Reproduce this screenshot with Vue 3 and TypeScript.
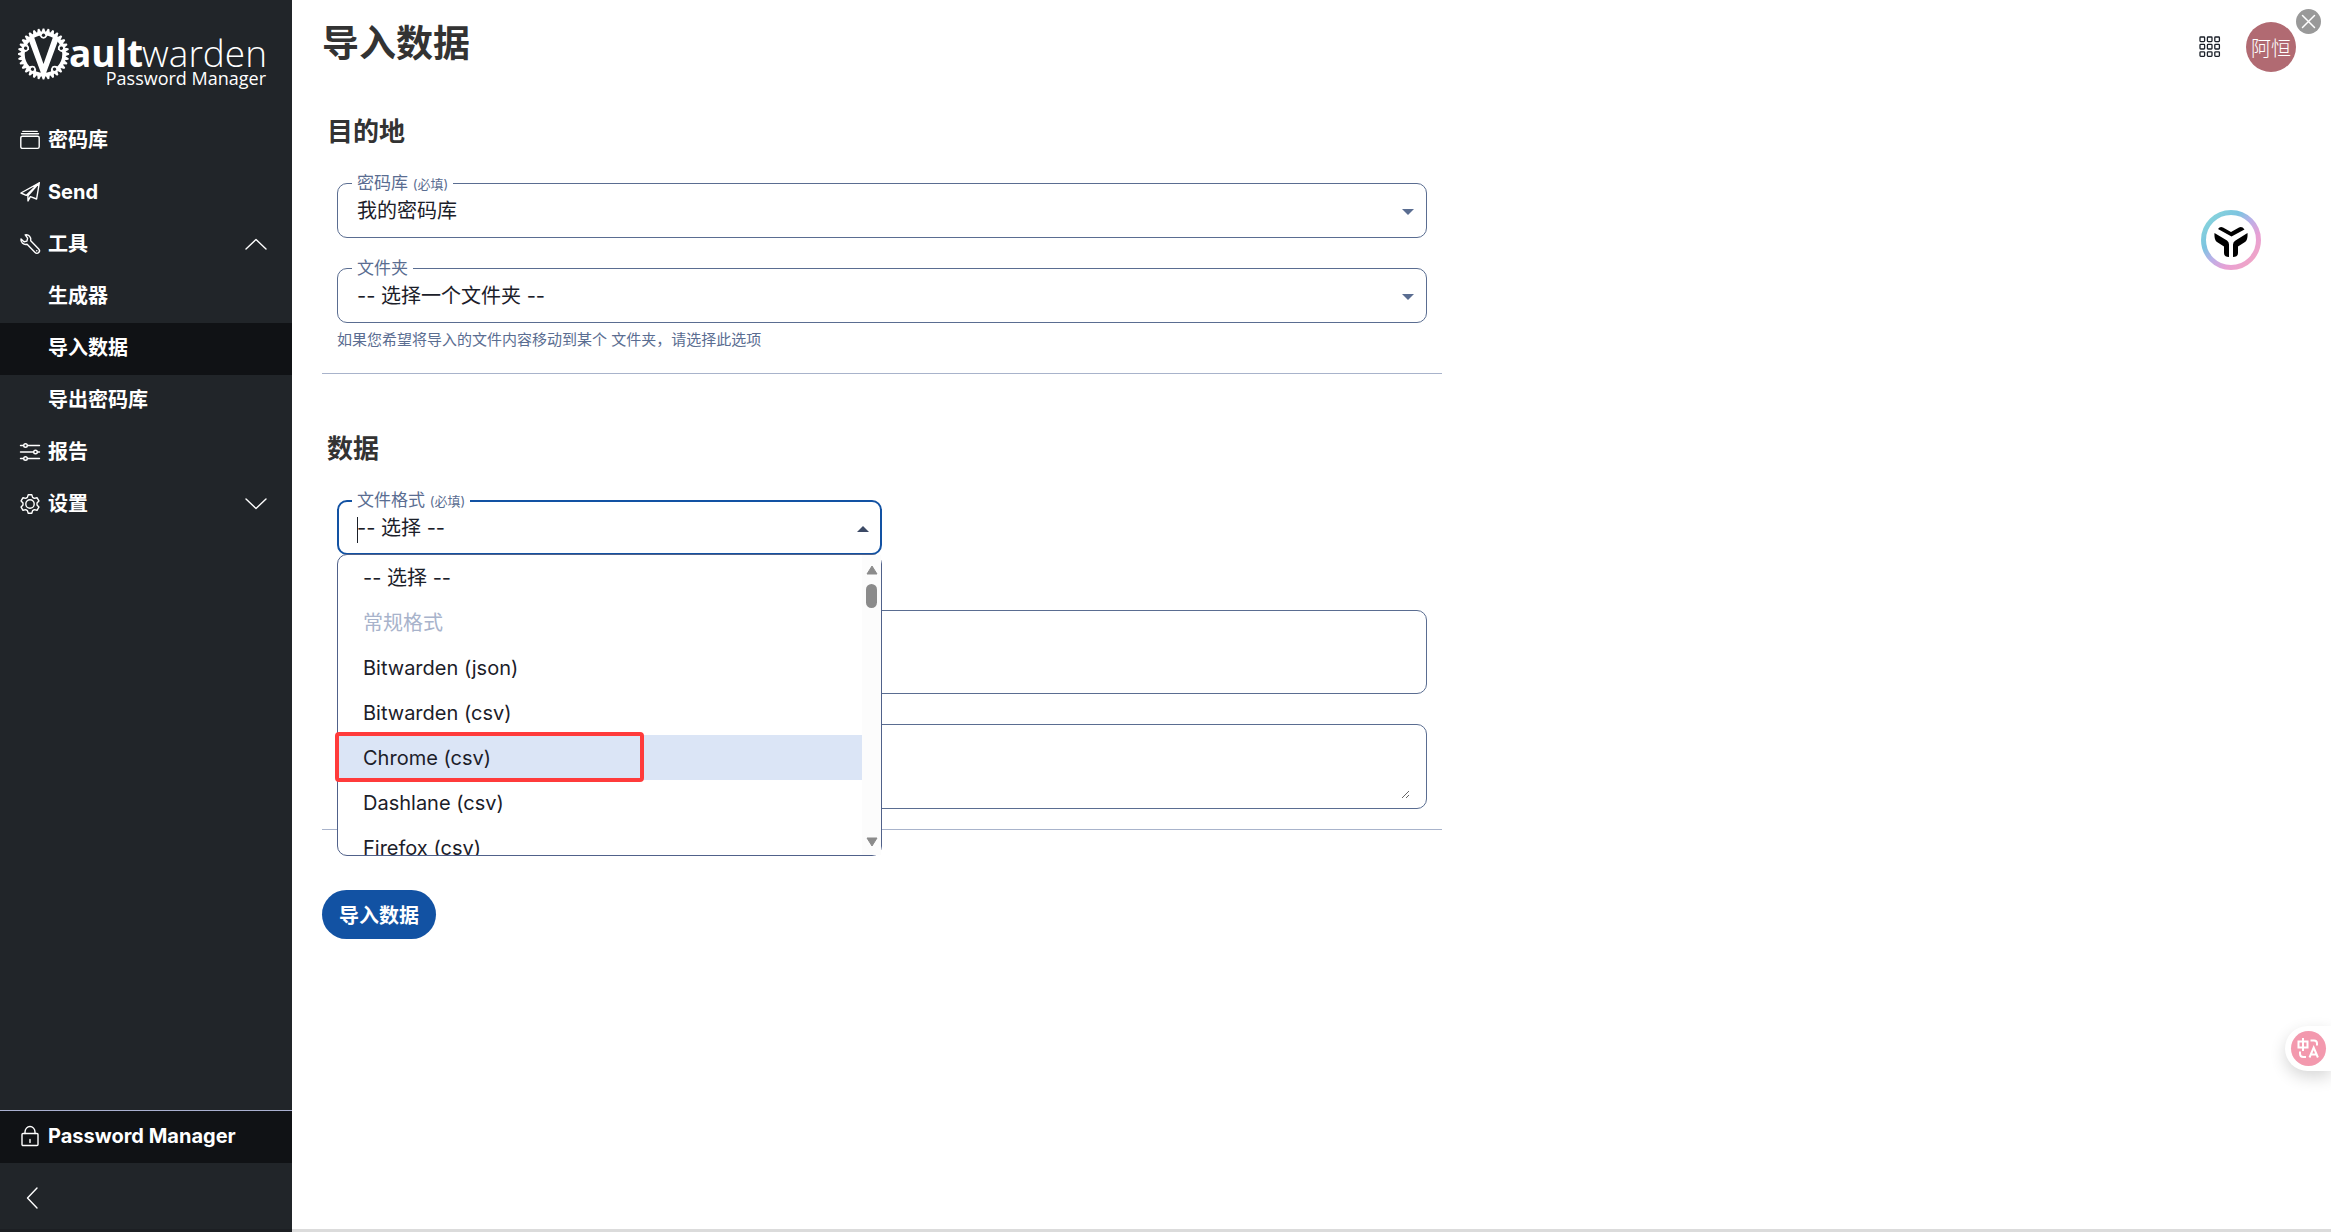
<script setup lang="ts">
import { ref } from 'vue'

interface NavItem {
  label: string
  icon?: 'vault' | 'send' | 'wrench' | 'sliders' | 'gear'
  active?: boolean
  chevron?: 'up' | 'down'
}

interface FormatOption {
  label: string
  heading?: boolean
  marked?: boolean
}

const navItems: NavItem[] = [
  { label: '密码库', icon: 'vault' },
  { label: 'Send', icon: 'send' },
  { label: '工具', icon: 'wrench', chevron: 'up' },
  { label: '生成器' },
  { label: '导入数据', active: true },
  { label: '导出密码库' },
  { label: '报告', icon: 'sliders' },
  { label: '设置', icon: 'gear', chevron: 'down' },
]

const formats: FormatOption[] = [
  { label: '-- 选择 --' },
  { label: '常规格式', heading: true },
  { label: 'Bitwarden (json)' },
  { label: 'Bitwarden (csv)' },
  { label: 'Chrome (csv)', marked: true },
  { label: 'Dashlane (csv)' },
  { label: 'Firefox (csv)' },
]

const vault = ref('我的密码库')
const folder = ref('-- 选择一个文件夹 --')
const format = ref('-- 选择 --')
const pasted = ref('')

// Teeth of the chainring around the V in the logo
const teeth = Array.from({ length: 32 }, (_, i) => i * 11.25)
const bolts = [0, 72, 144, 216, 288]
const gridCells = [0, 1, 2].flatMap((r) => [0, 1, 2].map((c) => ({ x: 1 + c * 7.4, y: 1 + r * 7.4 })))
</script>

<template>
  <div class="app">
    <aside class="sidebar">
      <a class="logo" href="#" aria-label="Vaultwarden Password Manager">
        <svg width="256" height="66" viewBox="0 0 256 66" fill="#fff">
          <g transform="translate(25.5 26)">
            <path v-for="a in teeth" :key="a" d="M-2.4-21 L-.8-25.6 H.8 L2.4-21Z" :transform="`rotate(${a})`" />
            <circle r="20.6" fill="none" stroke="#fff" stroke-width="3.600" />
            <g v-for="b in bolts" :key="b" :transform="`rotate(${b})`">
              <path d="M-4.5-19 Q-2.6-15.6 0-15.2 Q2.6-15.6 4.5-19Z" />
              <circle cy="-18.8" r="1.7" fill="#212529" />
            </g>
            <path d="M-15-14.500 L-9.500-17 L0 10 L9.500-17 L15-14.500 L2 20.500 H-2Z" />
          </g>
          <text x="51" y="39" class="logo-bold">ault</text>
          <text x="249" y="39" text-anchor="end" class="logo-light">warden</text>
          <text x="248" y="57" text-anchor="end" class="logo-sub">Password Manager</text>
        </svg>
      </a>

      <nav class="nav">
        <a v-for="item in navItems" :key="item.label" href="#" class="nav-item" :class="{ active: item.active }">
          <span class="nav-icon">
            <svg v-if="item.icon === 'vault'" viewBox="0 0 20 20" class="line">
              <rect x=".8" y="6.2" width="18.4" height="12.2" rx="1.6" />
              <path d="M1.5 3.8h17M2.8 1.4h14.4" />
            </svg>
            <svg v-else-if="item.icon === 'send'" viewBox="0 0 20 20" class="line">
              <path d="M19.3.8 .9 11l5.3 2.4L19.3.8 16.6 17l-6.2-2.4-2.4 4.3-.1-5.1L19.3.8Z" />
            </svg>
            <svg v-else-if="item.icon === 'wrench'" viewBox="0 0 20 20" class="line">
              <path d="M5.2.9C8.6.2 11.600 3.200 10.700 6.700l8 8.300a2.500 2.500 0 0 1-3.600 3.600l-8-8.300C3.600 11.200.300 8.200 1 4.900l3 2.900 2.900-.7.700-2.900L5.200.900Z" />
              <path d="M16.700 16.700h.1" />
            </svg>
            <svg v-else-if="item.icon === 'sliders'" viewBox="0 0 20 20" class="line">
              <path d="M.5 3.500h3M7.500 3.500h12M.5 10h13M17.500 10h2M.5 16.500h3M7.500 16.500h12" />
              <circle cx="5.500" cy="3.500" r="1.800" /><circle cx="15.500" cy="10" r="1.800" /><circle cx="5.500" cy="16.500" r="1.800" />
            </svg>
            <svg v-else-if="item.icon === 'gear'" viewBox="0 0 20 20" class="line">
              <circle cx="10" cy="10" r="4.200" />
              <path d="M8.200.8h3.600l.8 2.600 1.700 1 2.700-.7 1.900 3.200-1.900 2v2.200l1.900 2-1.900 3.200-2.700-.7-1.700 1-.8 2.600H8.200l-.8-2.600-1.700-1-2.700.7-1.900-3.200 1.900-2V8.900l-1.900-2L3 3.700l2.700.7 1.700-1Z" />
            </svg>
          </span>
          <span class="nav-label">{{ item.label }}</span>
          <svg v-if="item.chevron" class="line chevron" viewBox="0 0 22 12">
            <path :d="item.chevron === 'up' ? 'M1 11 11 1.500 21 11' : 'M1 1 11 10.500 21 1'" />
          </svg>
        </a>
      </nav>

      <a class="nav-item product" href="#">
        <span class="nav-icon">
          <svg viewBox="0 0 20 20" class="line">
            <rect x="2" y="7.500" width="16" height="12" rx="1" />
            <path d="M5 7.500V6a5 5.500 0 0 1 10 0v1.500M10 13.500v3" />
          </svg>
        </span>
        <span class="nav-label">Password Manager</span>
      </a>
      <div class="collapse-row">
        <button type="button" class="collapse" aria-label="收起">
          <svg class="line" width="12" height="22" viewBox="0 0 12 22"><path d="M11 1 1.500 11 11 21" /></svg>
        </button>
      </div>
    </aside>

    <main class="main">
      <header class="header">
        <h1>导入数据</h1>
        <div class="header-actions">
          <button type="button" class="grid-button" aria-label="切换产品">
            <svg width="22" height="22" viewBox="0 0 22 22">
              <rect v-for="(c, i) in gridCells" :key="i" :x="c.x" :y="c.y" width="4.600" height="4.600" rx=".8" />
            </svg>
          </button>
          <button type="button" class="avatar">阿恒</button>
        </div>
      </header>

      <form class="form" @submit.prevent>
        <section class="section">
          <h2>目的地</h2>
          <div class="fields">
            <div class="field">
              <label for="vault">密码库 <small>(必填)</small></label>
              <select id="vault" v-model="vault"><option>我的密码库</option></select>
              <svg class="caret" viewBox="0 0 12 6"><path d="M0 0h12L6 6Z" /></svg>
            </div>
            <div class="field with-hint">
              <label for="folder">文件夹</label>
              <select id="folder" v-model="folder"><option>-- 选择一个文件夹 --</option></select>
              <svg class="caret" viewBox="0 0 12 6"><path d="M0 0h12L6 6Z" /></svg>
            </div>
            <p class="hint">如果您希望将导入的文件内容移动到某个 文件夹，请选择此选项</p>
          </div>
        </section>

        <section class="section data">
          <h2>数据</h2>
          <div class="fields">
            <div class="field half open">
              <label for="format">文件格式 <small>(必填)</small></label>
              <select id="format" v-model="format"><option>-- 选择 --</option></select>
              <span class="text-cursor"></span>
              <svg class="caret" viewBox="0 0 12 6"><path d="M0 6h12L6 0Z" /></svg>
              <div class="panel">
                <ul class="options" role="listbox">
                  <li
                    v-for="o in formats"
                    :key="o.label"
                    :role="o.heading ? 'presentation' : 'option'"
                    class="option"
                    :class="{ heading: o.heading, marked: o.marked }"
                  >{{ o.label }}</li>
                </ul>
                <div class="scrollbar">
                  <svg width="12" height="10" viewBox="0 0 12 10"><path d="M6 1 11 9H1Z" /></svg>
                  <span class="thumb"></span>
                  <svg class="down" width="12" height="10" viewBox="0 0 12 10"><path d="M6 9 11 1H1Z" /></svg>
                </div>
                <span class="highlight"></span>
              </div>
            </div>
            <div class="box file-box"></div>
            <div class="box paste-box">
              <textarea v-model="pasted" aria-label="导入数据"></textarea>
            </div>
          </div>
        </section>

        <button type="submit" class="submit">导入数据</button>
      </form>
    </main>

    <button type="button" class="float close" aria-label="关闭">
      <svg width="25" height="25" viewBox="0 0 25 25"><path d="M6.500 6.500l12 12M18.500 6.500l-12 12" stroke="#fff" stroke-width="1.500" stroke-linecap="round" /></svg>
    </button>
    <button type="button" class="float assistant" aria-label="助手">
      <svg width="60" height="60" viewBox="0 0 60 60">
        <defs>
          <linearGradient id="ring" x1="0.1" y1="0.1" x2="0.9" y2="0.9">
            <stop offset="0" stop-color="#86d3dc" /><stop offset=".28" stop-color="#7cc4e0" />
            <stop offset=".5" stop-color="#bab0e8" /><stop offset=".75" stop-color="#e8a0d4" /><stop offset="1" stop-color="#f0a5c6" />
          </linearGradient>
        </defs>
        <circle cx="30" cy="30" r="27.500" fill="#fff" stroke="url(#ring)" stroke-width="5" />
        <path d="M17 19q2-3 5-1.500L30 22l8-4.500q3-1.500 5.500 2L30.500 26.500Z" />
        <path d="M13.500 23 26 30.500q2 1.500 2 4V47q-5 0-5-4V36.500L16 32q-3-2-2.500-9Z" />
        <path d="M46.500 23 34.500 30.500q-2.500 1.500-2.500 4V47q5 0 5-4V36.500l7-4.500q3-2 2.500-9Z" />
      </svg>
    </button>
    <div class="float translate">
      <button type="button" aria-label="翻译">
        <svg width="35" height="35" viewBox="0 0 35 35" fill="none" stroke="#fff" stroke-width="2">
          <path d="M7.500 10.500h9v6h-9ZM12 7v13M19.500 9.500h3.500q3 0 3 3v2M9 20.500v2q0 3.500 3.500 3.500H15" />
          <path d="M18.500 26.500 22.700 16.500 26.900 26.500M20 23.500h5.500" />
        </svg>
      </button>
    </div>
    <div class="float bottom-edge"></div>
  </div>
</template>

<style>
body {
  margin: 0;
}
</style>

<style scoped>
* {
  box-sizing: border-box;
}
.app {
  position: relative;
  display: flex;
  min-height: 100vh;
  overflow: hidden;
  background: #fff;
  color: #1b2029;
  font-family: Inter, "Noto Sans CJK SC", sans-serif;
  font-size: 20px;
}
button {
  padding: 0;
  border: 0;
  background: none;
  font: inherit;
  cursor: pointer;
}
button svg {
  display: block;
}
.line {
  fill: none;
  stroke: #fff;
  stroke-width: 1.4;
  stroke-linecap: round;
  stroke-linejoin: round;
}
.sidebar {
  display: flex;
  flex: none;
  flex-direction: column;
  width: 292px;
  background: #212529;
  color: #fff;
}
.logo {
  display: block;
  height: 115px;
  padding: 28px 18px 0;
}
.logo text {
  font-family: "Open Sans", "Noto Sans", sans-serif;
}
.logo .logo-bold {
  font-size: 37px;
  font-weight: 700;
}
.logo .logo-light {
  font-size: 37px;
  font-weight: 300;
}
.logo .logo-sub {
  font-size: 18px;
}
.nav {
  flex: 1;
}
.nav-item {
  display: flex;
  align-items: center;
  height: 52px;
  padding: 0 25px 2px 20px;
  color: #fff;
  font-weight: 700;
  line-height: 24px;
  text-decoration: none;
}
.nav-item.active,
.nav-item.product {
  background: #101215;
}
.nav-item.product {
  height: 53px;
  border-top: 1px solid #aab0d0;
}
.nav-icon {
  width: 20px;
  height: 20px;
  margin-right: 8px;
}
.nav-icon svg {
  display: block;
  width: 20px;
  height: 20px;
  overflow: visible;
}
.nav-label {
  flex: 1;
  height: 24px;
}
.chevron {
  width: 22px;
  height: 12px;
}
.collapse-row {
  display: flex;
  align-items: center;
  height: 69px;
  padding: 0 26px;
}
.main {
  flex: 1;
  min-width: 0;
  padding: 22px 30px 40px;
}
.header {
  display: flex;
  justify-content: space-between;
  height: 50px;
  padding-right: 5px;
}
h1 {
  margin: 0;
  color: #333;
  font-size: 37px;
  font-weight: 700;
  line-height: 44px;
}
.header-actions {
  display: flex;
  align-items: center;
  gap: 25px;
}
.grid-button rect {
  fill: none;
  stroke: #1b2029;
  stroke-width: 1.3;
}
.avatar {
  width: 50px;
  height: 50px;
  border-radius: 50%;
  background: #b16a72;
  color: #fff;
  font-weight: 300;
}
.form {
  max-width: 1120px;
  margin-top: 43px;
}
.section {
  padding-bottom: 20px;
  border-bottom: 1px solid #a8b3cb;
}
.section.data {
  margin-top: 58px;
}
h2 {
  margin: 0 0 34px;
  padding-left: 5px;
  color: #333;
  font-size: 26px;
  font-weight: 700;
  line-height: 34px;
}
.fields {
  padding: 0 15px;
}
.field {
  position: relative;
  height: 55px;
  margin-bottom: 30px;
}
.field.with-hint {
  margin-bottom: 5px;
}
.field label {
  position: absolute;
  top: -12px;
  left: 15px;
  padding: 0 5px;
  background: #fff;
  color: #5a6d91;
  font-size: 17px;
  line-height: 24px;
}
.field small {
  font-size: 13px;
}
.field select {
  width: 100%;
  height: 100%;
  padding: 1px 40px 0 19px;
  border: 1px solid #5a6d91;
  border-radius: 10px;
  outline: 0;
  appearance: none;
  background: #fff;
  color: #1b2029;
  font: inherit;
}
.caret {
  position: absolute;
  top: 26px;
  right: 13px;
  width: 12px;
  height: 6px;
  fill: #5a6d91;
}
.half {
  width: 50%;
  margin-bottom: 55px;
}
.field.open select {
  padding-left: 18px;
  border: 2px solid #1252a3;
}
.open .caret {
  fill: #3c4a66;
}
.text-cursor {
  position: absolute;
  top: 17px;
  left: 20px;
  width: 1px;
  height: 26px;
  background: #1b2029;
}
.hint {
  margin: 0 0 2px;
  color: #5a6d91;
  font-size: 15px;
  line-height: 23px;
}
.panel {
  position: absolute;
  z-index: 2;
  top: 54px;
  left: 0;
  display: flex;
  width: 100%;
  height: 302px;
  border: 1px solid #50618a;
  border-radius: 10px;
  background: #fff;
}
.options {
  flex: 1;
  margin: 0;
  padding: 0;
  overflow: hidden;
  list-style: none;
}
.option {
  height: 45px;
  padding-left: 25px;
  line-height: 47px;
}
.option.heading {
  color: #a8b3cb;
}
.option.marked {
  background: #dbe5f6;
}
.scrollbar {
  display: flex;
  flex-direction: column;
  align-items: center;
  width: 19px;
  padding: 10px 0 8px;
  background: #fcfcfc;
}
.scrollbar svg {
  fill: #8b8b8b;
  stroke: #8b8b8b;
  stroke-linejoin: round;
}
.thumb {
  width: 11px;
  height: 24px;
  margin-top: 9px;
  border-radius: 6px;
  background: #8b8b8b;
}
.down {
  margin-top: auto;
}
.highlight {
  position: absolute;
  top: 177px;
  left: -3px;
  width: 309px;
  height: 50px;
  border: 4px solid #ff3b3b;
  border-radius: 4px;
}
.box {
  height: 85px;
  border: 1px solid #5a6d91;
  border-radius: 10px;
}
.file-box {
  height: 84px;
  margin-bottom: 30px;
}
.paste-box {
  padding: 9px 16px;
}
.paste-box textarea {
  display: block;
  width: 100%;
  height: 100%;
  padding: 0;
  border: 0;
  outline: 0;
  background: transparent;
  font: inherit;
}
.submit {
  height: 49px;
  margin-top: 60px;
  padding: 0 17px;
  border-radius: 25px;
  background: #1252a3;
  color: #fff;
  font-weight: 700;
}
.float {
  position: absolute;
  z-index: 3;
}
.close {
  top: 9px;
  right: 10px;
  border-radius: 50%;
  background: #999;
}
.assistant {
  top: 210px;
  right: 70px;
}
.translate {
  right: 0;
  bottom: 161px;
  padding: 5px 5px 5px 6px;
  border-radius: 23px 0 0 23px;
  background: #fff;
  box-shadow: 0 6px 16px rgba(0, 0, 0, 0.16);
}
.translate button {
  display: block;
  border-radius: 50%;
  background: #f399ae;
}
.bottom-edge {
  right: 0;
  bottom: 0;
  left: 0;
  height: 3px;
  background: rgba(0, 0, 0, 0.14);
}
</style>
